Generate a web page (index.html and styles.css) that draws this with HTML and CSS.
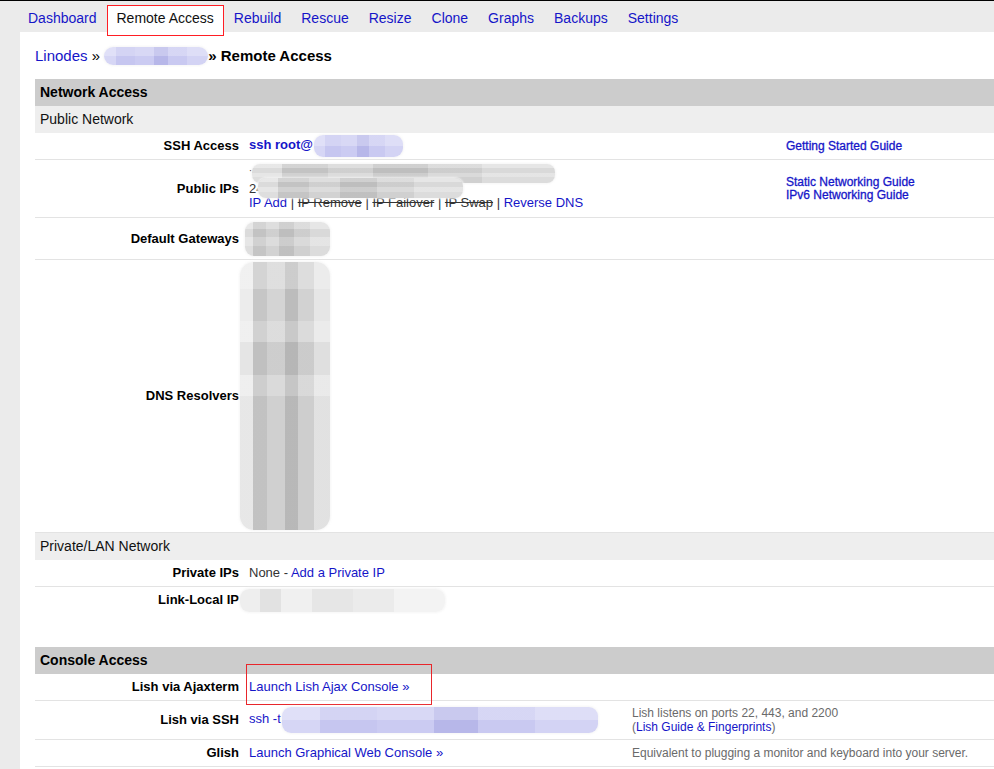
FILE: index.html
```html
<!DOCTYPE html>
<html>
<head>
<meta charset="utf-8">
<title>Remote Access</title>
<link rel="stylesheet" href="styles.css">
</head>
<body>
<div class="topline"></div>
<nav class="tabs">
  <a class="tab">Dashboard</a>
  <span class="tab-active">Remote Access</span>
  <a class="tab">Rebuild</a>
  <a class="tab">Rescue</a>
  <a class="tab">Resize</a>
  <a class="tab">Clone</a>
  <a class="tab">Graphs</a>
  <a class="tab">Backups</a>
  <a class="tab">Settings</a>
</nav>
<main class="main">
  <div class="crumbs"><a class="lnk">Linodes</a> » <span class="blur lav crumb-blur"></span><b>» Remote Access</b></div>

  <section class="tbl tbl-net">
    <div class="hdr">Network Access</div>
    <div class="sub">Public Network</div>

    <div class="row">
      <div class="lbl">SSH Access</div>
      <div class="val"><a class="lnk bold">ssh root@</a><span class="blur lav ssh-blur"></span></div>
      <div class="note"><a class="lnk guide">Getting Started Guide</a></div>
    </div>

    <div class="row h57">
      <div class="lbl">Public IPs</div>
      <div class="val">
        <div class="ipblock">
          <div class="ipline">&#729;</div>
          <div class="ipline">24</div>
          <span class="blur gray ip-blur1"></span>
          <span class="blur gray ip-blur2"></span>
        </div>
        <div class="iplinks"><a class="lnk">IP Add</a> | <span class="strike">IP Remove</span> | <span class="strike">IP Failover</span> | <span class="strike">IP Swap</span> | <a class="lnk">Reverse DNS</a></div>
      </div>
      <div class="note"><a class="lnk guide">Static Networking Guide</a><br><a class="lnk guide">IPv6 Networking Guide</a></div>
    </div>

    <div class="row h41">
      <div class="lbl">Default Gateways</div>
      <div class="val"><span class="blur gray gw-blur"></span></div>
      <div class="note"></div>
    </div>

    <div class="row h272">
      <div class="lbl">DNS Resolvers</div>
      <div class="val"><span class="blur gray dns-blur"></span></div>
      <div class="note"></div>
    </div>

    <div class="sub">Private/LAN Network</div>

    <div class="row">
      <div class="lbl">Private IPs</div>
      <div class="val"><span class="dim">None - </span><a class="lnk">Add a Private IP</a></div>
      <div class="note"></div>
    </div>

    <div class="row">
      <div class="lbl">Link-Local IP</div>
      <div class="val"><span class="blur light ll-blur"></span></div>
      <div class="note"></div>
    </div>
  </section>

  <section class="tbl tbl-con">
    <div class="hdr">Console Access</div>

    <div class="row">
      <div class="lbl">Lish via Ajaxterm</div>
      <div class="val"><a class="lnk">Launch Lish Ajax Console »</a></div>
      <div class="note"></div>
      <div class="annot"></div>
    </div>

    <div class="row h38">
      <div class="lbl">Lish via SSH</div>
      <div class="val"><a class="lnk">ssh -t</a><span class="blur lav lish-blur"></span></div>
      <div class="note gray-note">Lish listens on ports 22, 443, and 2200<br>(<a class="lnk">Lish Guide &amp; Fingerprints</a>)</div>
    </div>

    <div class="row">
      <div class="lbl">Glish</div>
      <div class="val"><a class="lnk">Launch Graphical Web Console »</a></div>
      <div class="note gray-note">Equivalent to plugging a monitor and keyboard into your server.</div>
    </div>
  </section>
</main>
</body>
</html>
```

FILE: styles.css
```css
html, body {
  margin: 0;
  padding: 0;
}
body {
  background: #ebebeb;
  font-family: "Liberation Sans", Arial, sans-serif;
  color: #111;
  width: 994px;
  overflow: hidden;
}
.topline {
  height: 1px;
  background: #000;
}
.tabs {
  display: flex;
  align-items: flex-start;
  height: 31px;
  padding-left: 18px;
  background: #ebebeb;
  position: relative;
  z-index: 2;
}
.tab {
  font-size: 14px;
  line-height: 16px;
  padding: 9px 10px 0;
  color: #1515c8;
  white-space: nowrap;
}
.tab-active {
  font-size: 14px;
  line-height: 16px;
  white-space: nowrap;
  color: #111;
  background: #fff;
  box-shadow: inset 0 0 0 1px #ff1e24;
  padding: 5px 10px 10px;
  margin-top: 4px;
}
.main {
  background: #fff;
  margin-left: 20px;
  padding-left: 15px;
  min-height: 737px;
}
.lnk {
  color: #1515c8;
  text-decoration: none;
}
.bold { font-weight: bold; }
.crumbs {
  font-size: 15px;
  line-height: 18px;
  padding-top: 15px;
  margin-bottom: 14px;
  color: #000;
}
.crumbs b { color: #000; }
.blur {
  display: inline-block;
  vertical-align: middle;
  border-radius: 9px;
  box-shadow: 0 0 2px 1px rgba(245,245,245,0.9);
}
.lav {
  background:
    linear-gradient(180deg, rgba(255,255,255,0.25) 0 50%, rgba(255,255,255,0) 50% 100%),
    linear-gradient(90deg, #d6d6f5 0 12%, #c6c6f0 12% 30%, #cbcbf2 30% 48%, #b7b7e9 48% 62%, #c9c9f1 62% 80%, #d3d3f4 80% 100%);
}
.gray {
  background:
    linear-gradient(180deg, rgba(255,255,255,0.2) 0 20%, rgba(0,0,0,0.03) 20% 45%, rgba(255,255,255,0.15) 45% 70%, rgba(0,0,0,0.02) 70% 100%),
    linear-gradient(90deg, #e2e2e2 0 10%, #c9c9c9 10% 25%, #d6d6d6 25% 40%, #c4c4c4 40% 58%, #d4d4d4 58% 76%, #e0e0e0 76% 100%);
}
.light {
  background:
    linear-gradient(90deg, #eeeeee 0 10%, #e2e2e2 10% 20%, #f0f0f0 20% 35%, #e6e6e6 35% 55%, #ebebeb 55% 75%, #f3f3f3 75% 100%);
}
.crumb-blur {
  width: 104px;
  height: 18px;
  margin-top: -2px;
}
.tbl {
  font-size: 13px;
}
.tbl-con {
  margin-top: 34px;
}
.hdr {
  background: #cccccc;
  height: 27px;
  line-height: 27px;
  padding-left: 5px;
  font-size: 14px;
  font-weight: bold;
  color: #000;
}
.sub {
  background: #eeeeee;
  height: 27px;
  line-height: 27px;
  padding-left: 5px;
  font-size: 14px;
  color: #111;
}
.row {
  display: grid;
  align-items: center;
  min-height: 26px;
  border-bottom: 1px solid #e3e3e3;
  position: relative;
}
.tbl-net .row { grid-template-columns: 214px 537px 1fr; }
.tbl-con .row { grid-template-columns: 214px 383px 1fr; }
.tbl-net .row:last-child { border-bottom: none; }
.h57 { min-height: 57px; }
.h41 { min-height: 41px; }
.h272 { min-height: 272px; }
.h38 { min-height: 38px; }
.lbl {
  text-align: right;
  padding-right: 10px;
  font-weight: bold;
  line-height: 14px;
  color: #000;
  white-space: nowrap;
}
.val {
  line-height: 14px;
  color: #222;
  white-space: nowrap;
}
.note {
  font-size: 12px;
  line-height: 13px;
  white-space: nowrap;
}
.guide {
  -webkit-text-stroke: 0.3px #1515c8;
}
.gray-note {
  color: #6a6a6a;
  line-height: 14px;
}
.ssh-blur {
  width: 89px;
  height: 22px;
  margin-left: 1px;
}
.ipblock {
  position: relative;
  height: 28px;
}
.ipline {
  height: 14px;
  color: #333;
}
.ip-blur1 {
  position: absolute;
  left: 3px;
  top: -4px;
  width: 303px;
  height: 19px;
  border-radius: 8px;
}
.ip-blur2 {
  position: absolute;
  left: 9px;
  top: 10px;
  width: 205px;
  height: 20px;
  border-radius: 8px;
}
.iplinks { color: #333; }
.strike {
  text-decoration: line-through;
  color: #333;
}
.gw-blur {
  width: 85px;
  height: 34px;
  margin-left: -4px;
}
.dns-blur {
  width: 90px;
  height: 268px;
  margin-left: -9px;
  border-radius: 14px;
  background:
    linear-gradient(180deg, rgba(255,255,255,0.25) 0 10%, rgba(0,0,0,0) 10% 22%, rgba(255,255,255,0.2) 22% 30%, rgba(0,0,0,0.03) 30% 42%, rgba(255,255,255,0.15) 42% 50%, rgba(0,0,0,0.02) 50% 100%),
    linear-gradient(90deg, #ececec 0 15%, #c6c6c6 15% 30%, #d4d4d4 30% 50%, #bcbcbc 50% 65%, #d2d2d2 65% 82%, #e6e6e6 82% 100%);
}
.dim { color: #333; }
.ll-blur {
  width: 205px;
  height: 23px;
  margin-left: -9px;
}
.lish-blur {
  width: 316px;
  height: 26px;
  margin-left: 1px;
}
.annot {
  position: absolute;
  left: 211px;
  top: -10px;
  width: 186px;
  height: 41px;
  box-sizing: border-box;
  border: 1px solid #e8262b;
  pointer-events: none;
}
```
